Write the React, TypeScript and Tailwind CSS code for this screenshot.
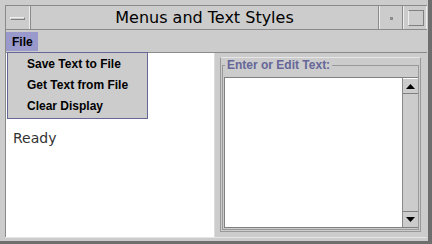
import React from 'react';

const menuItems = ['Save Text to File', 'Get Text from File', 'Clear Display'];

function TitleBar() {
  return (
    <div className="flex h-[25px] border-t border-b border-l border-[#8a8a8a] border-r-0">
      <div className="flex w-[24px] items-center justify-center border-r border-[#eeeeee]">
        <div className="mt-[1px] h-[3px] w-[15px] border-t border-l border-[#f0f0f0] border-b border-r border-b-[#808080] border-r-[#808080] bg-[#cccccc]" />
      </div>
      <div className="flex flex-1 items-center justify-center border-l border-[#8a8a8a] border-r">
        <span className="text-[16px] leading-[20px] text-black" style={{ fontFamily: '"DejaVu Sans", sans-serif' }}>
          Menus and Text Styles
        </span>
      </div>
      <div className="flex w-[24px] items-center justify-center border-l border-[#eeeeee] border-r border-r-[#8a8a8a]">
        <div className="mt-[1px] h-[3px] w-[3px] bg-[#8c8c8c]" />
      </div>
      <div className="flex w-[24px] items-center justify-center border-l border-[#eeeeee] border-r border-r-[#eeeeee]">
        <div className="ml-[2px] h-[16px] w-[16px] border border-t-[#808080] border-l-[#eeeeee] border-b-[#808080] border-r-[#808080]" />
      </div>
    </div>
  );
}

function Scrollbar() {
  return (
    <div className="flex w-[16px] flex-col border-l border-[#8a8a8a] bg-[#cccccc]">
      <div className="flex h-[16px] items-center justify-center border-b border-[#808080] border-t border-t-white">
        <svg width="9" height="5" viewBox="0 0 9 5">
          <polygon points="4.5,0 9,5 0,5" fill="#000" />
        </svg>
      </div>
      <div className="flex-1" />
      <div className="flex h-[16px] items-center justify-center border-t border-[#808080]">
        <svg width="9" height="5" viewBox="0 0 9 5">
          <polygon points="0,0 9,0 4.5,5" fill="#000" />
        </svg>
      </div>
    </div>
  );
}

export default function App() {
  const sans = { fontFamily: '"Liberation Sans", Arial, sans-serif' };
  return (
    <div className="relative h-[244px] w-[432px] overflow-hidden border-r-[4px] border-b-[3px] border-[#6e6e6e] bg-[#cccccc]">
      <div className="flex h-full flex-col pt-[5px] pl-[5px] pr-[1px]">
        <TitleBar />

        <div className="flex h-[23px] items-start border-l border-[#8a8a8a] border-b border-b-[#8a8a8a] pt-[2px]">
          <div
            className="flex h-[19px] w-[32px] items-center pl-[6px] text-[12px] font-bold text-black bg-[#9999cc]"
            style={sans}
          >
            File
          </div>
        </div>

        <div className="flex h-[184px]">
          <div className="w-[210px] border-l border-[#8a8a8a] border-r border-r-[#dddddd] bg-white pl-[7px] pt-[72px]">
            <span className="text-[14px] leading-[17px] text-[#333333]" style={{ fontFamily: '"DejaVu Sans", sans-serif' }}>
              Ready
            </span>
          </div>

          <div className="flex flex-1 flex-col pl-[5px] pt-[4px] pr-[6px] pb-[5px]">
            <div className="flex flex-1 flex-col border border-t-[#e6e6e6] border-l-[#999999] border-b-[#999999] border-r-[#999999] pl-[1px] pr-[1px] pb-[1px]">
              <fieldset className="flex flex-1 flex-col border border-[#999999] px-[2px] pb-[1px] pt-0">
                <legend
                  className="px-[2px] text-[12px] font-bold leading-[14px] text-[#666699]"
                  style={sans}
                >
                  Enter or Edit Text:
                </legend>
                <div className="-ml-[1px] -mr-[2px] mt-[5px] flex h-[151px] border border-[#808080] border-r-0 bg-white">
                  <div className="flex-1" />
                  <Scrollbar />
                </div>
              </fieldset>
            </div>
          </div>
        </div>

        <div className="flex-1 border-t border-[#e6e6e6]" />
      </div>

      <div
        className="absolute left-[7px] top-[52px] w-[141px] border border-[#666699] bg-[#cccccc] pb-[2px]"
        style={sans}
      >
        {menuItems.map((item) => (
          <div key={item} className="flex h-[21px] items-center pl-[19px] text-[12px] font-bold text-black">
            {item}
          </div>
        ))}
      </div>
    </div>
  );
}
